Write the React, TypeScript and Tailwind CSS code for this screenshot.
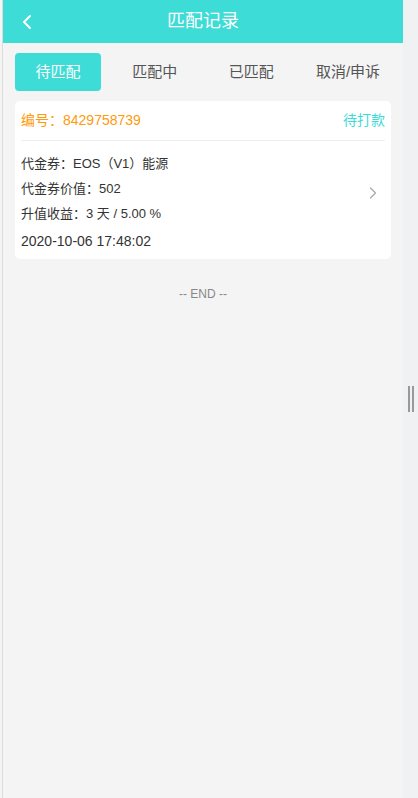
import { ChevronLeft, ChevronRight } from 'lucide-react'

const tabs = ['待匹配', '匹配中', '已匹配', '取消/申诉']

export default function App() {
  return (
    <div
      className="flex h-[798px] w-[418px] bg-[#f4f4f4] text-[#333]"
      style={{ fontFamily: '"Liberation Sans", Arial, "Noto Sans CJK SC", sans-serif' }}
    >
      {/* left edge */}
      <div className="w-[3px] border-r border-[#dcdcdc] bg-[#f4f4f4]" />

      {/* page */}
      <div className="flex w-[400px] flex-col">
        <div className="relative flex h-[43px] items-center justify-center bg-[#3ddcd6]">
          <ChevronLeft className="absolute left-[12px] top-[10px] h-[24px] w-[24px] text-white" strokeWidth={2} />
          <span className="text-[18px] text-white">匹配记录</span>
        </div>

        <div className="px-[12px]">
          {/* tabs */}
          <div className="mt-[10px] flex justify-between">
            {tabs.map((t, i) => (
              <div
                key={t}
                className={`flex h-[38px] w-[86px] items-center justify-center rounded-[4px] text-[15px] ${
                  i === 0 ? 'bg-[#3ddcd6] text-white' : 'text-[#555]'
                }`}
              >
                {t}
              </div>
            ))}
          </div>

          {/* card */}
          <div className="mt-[10px] rounded-[5px] bg-white px-[6px]">
            <div className="flex h-[40px] items-center justify-between border-b border-[#eee] text-[14px]">
              <span className="text-[#ff9a0d]">编号：8429758739</span>
              <span className="text-[#3ddcd6]">待打款</span>
            </div>
            <div className="flex items-center pt-[10px] pb-[5px]">
              <div className="flex-1 text-[13px] text-[#333]">
                <div className="h-[25px] leading-[25px]">代金券：EOS（V1）能源</div>
                <div className="h-[25px] leading-[25px]">代金券价值：502</div>
                <div className="h-[25px] leading-[25px]">升值收益：3 天 / 5.00 %</div>
                <div className="mt-[3px] h-[25px] text-[14px] leading-[25px]">2020-10-06 17:48:02</div>
              </div>
              <ChevronRight className="mr-[2px] mb-[20px] h-[20px] w-[20px] text-[#aaa]" strokeWidth={1.5} />
            </div>
          </div>

          <div className="mt-[26px] text-center text-[12px] text-[#888]">-- END --</div>
        </div>
      </div>

      {/* right strip */}
      <div className="flex flex-1 items-center justify-center bg-[#f0f1f2]">
        <div className="flex gap-[2px]">
          <div className="h-[26px] w-[2px] bg-[#999]" />
          <div className="h-[26px] w-[2px] bg-[#999]" />
        </div>
      </div>
    </div>
  )
}
